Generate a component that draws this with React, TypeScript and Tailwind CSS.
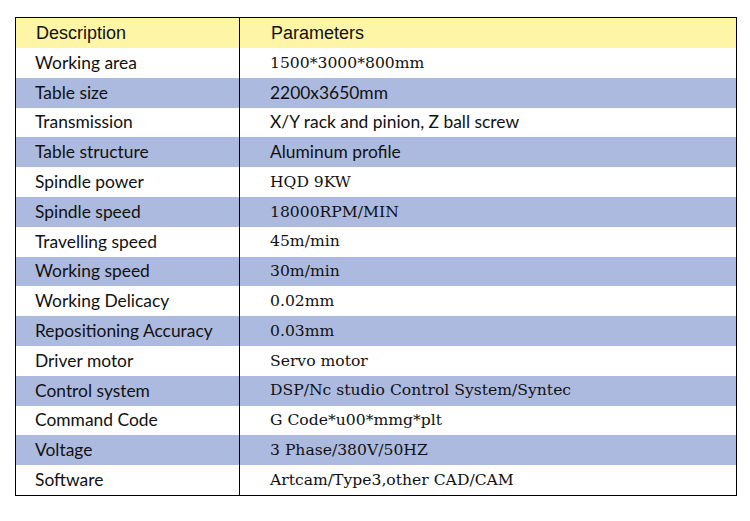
import React from 'react';

type Row = { label: string; value: string; serif?: boolean };

const rows: Row[] = [
  { label: 'Working area', value: '1500*3000*800mm', serif: true },
  { label: 'Table size', value: '2200x3650mm' },
  { label: 'Transmission', value: 'X/Y rack and pinion, Z ball screw' },
  { label: 'Table structure', value: 'Aluminum profile' },
  { label: 'Spindle power', value: 'HQD 9KW', serif: true },
  { label: 'Spindle speed', value: '18000RPM/MIN', serif: true },
  { label: 'Travelling speed', value: '45m/min', serif: true },
  { label: 'Working speed', value: '30m/min', serif: true },
  { label: 'Working Delicacy', value: '0.02mm', serif: true },
  { label: 'Repositioning Accuracy', value: '0.03mm', serif: true },
  { label: 'Driver motor', value: 'Servo motor', serif: true },
  { label: 'Control system', value: 'DSP/Nc studio Control System/Syntec', serif: true },
  { label: 'Command Code', value: 'G Code*u00*mmg*plt', serif: true },
  { label: 'Voltage', value: '3 Phase/380V/50HZ', serif: true },
  { label: 'Software', value: 'Artcam/Type3,other CAD/CAM', serif: true },
];

export default function App() {
  return (
    <div className="w-[750px] h-[521px] bg-white pt-[17px] pl-[15px]">
      <div className="w-[722px] border border-black">
        {/* header */}
        <div className="flex h-[30px] bg-[#fff5a6] font-['Liberation_Sans',Arial,sans-serif] text-[18px] text-[#111]">
          <div className="w-[224px] border-r border-black flex items-center pl-[20px]">Description</div>
          <div className="flex-1 flex items-center pl-[31px]">Parameters</div>
        </div>

        {rows.map((r, i) => (
          <div
            key={r.label}
            className={`flex h-[29.8px] text-[#111] ${i % 2 === 1 ? 'bg-[#adbadf]' : 'bg-white'}`}
          >
            <div className="w-[224px] border-r border-black flex items-center pl-[19px] font-['Lato','Noto_Sans',sans-serif] text-[17.4px]">
              {r.label}
            </div>
            <div
              className={`flex-1 flex items-center pl-[30px] ${
                r.serif
                  ? "font-['DejaVu_Serif','Liberation_Serif',serif] text-[15.6px] pt-[1px]"
                  : "font-['Lato','Noto_Sans',sans-serif] text-[17.4px]"
              }`}
            >
              {r.value}
            </div>
          </div>
        ))}
      </div>
    </div>
  );
}
